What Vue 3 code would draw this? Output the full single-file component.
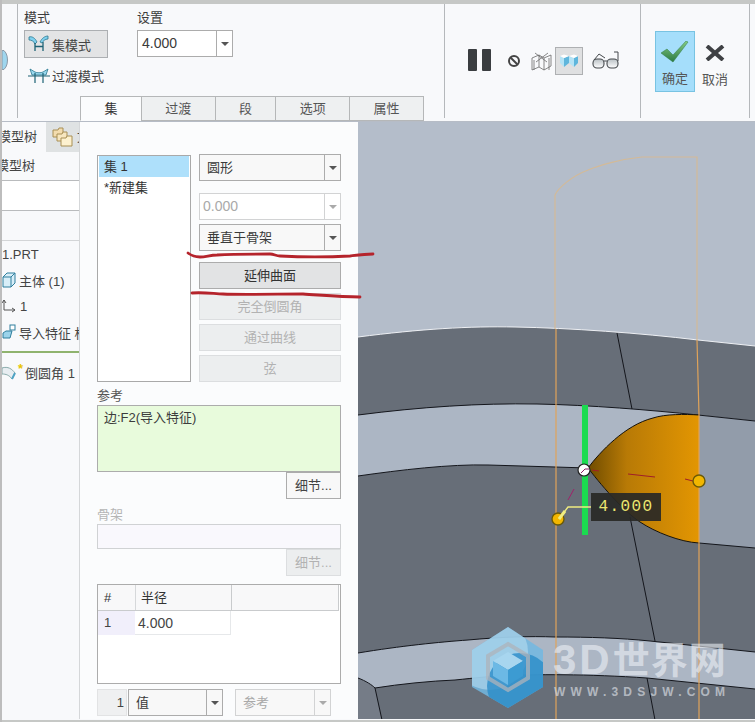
<script setup>
const tabs = ['集', '过渡', '段', '选项', '属性']
const disabledBtns = ['完全倒圆角', '通过曲线', '弦']

// model edges, shared by the filled faces and the black lines over them
const edgeTop = 'M358 337C420 329 470 326 515 327C570 328 640 333 698 340L755 346'
const edgeUpper = 'M358 415C420 407 480 403 537 404C590 405 650 410 698 415L755 421'
const edgeMid = 'M358 476C400 470 450 464 488 465L555 467L588 468'
const edgeMidFull = edgeMid + 'C605 490 625 512 640 522C655 532 680 542 700 543L755 548'
const edgeLow = 'M358 653C400 646 440 642 468 640C500 637 530 636 555 637C590 637 620 638 650 641L755 652'
const edgeBottom = 'M375 688C400 684 430 681 455 680C475 678 490 676 505 676C530 674 590 674 647 678L755 689'
const close = 'L755 722L358 722Z'
</script>

<template>
  <div class="page">
    <div class="topline"></div>
    <header class="ribbon">
      <div class="group group-edge">
        <svg class="sliver" width="6" height="20" viewBox="0 0 6 20"><path d="M0 0A5.5 10 0 0 1 0 20Z" fill="#9fd6ee" stroke="#8a98a5"/></svg>
      </div>
      <div class="group group-mode">
        <div class="mode-col">
          <div class="label">模式</div>
          <div class="mode-btn active">
            <svg width="24" height="20" viewBox="0 0 24 20"><path d="M2 3C5 2 8 4 10 8L8 10C7 7 4 6 2 6Z" fill="#7fd0ee" stroke="#2b7890" stroke-width=".8"/><path d="M21 2C18 2 15 4 13 8L15 9C16 7 18 5 21 5Z" fill="#7fd0ee" stroke="#2b7890" stroke-width=".8"/><path d="M8 9V17M16 8V17M8 12.5H16" stroke="#1d6275" stroke-width="1.3" fill="none"/></svg>
            集模式
          </div>
          <div class="mode-btn">
            <svg width="24" height="20" viewBox="0 0 24 20"><path d="M3 4L8 7C10 8 14 8 16 7L21 4L19 10H5Z" fill="#9ad8ee" stroke="#2b7890" stroke-width=".8"/><path d="M1 11H23M8 8V18M16 8V18" stroke="#1d6275" stroke-width="1.2" fill="none"/></svg>
            过渡模式
          </div>
        </div>
        <div class="setting-col">
          <div class="label">设置</div>
          <div class="select wide"><span class="value">4.000</span><i class="arrow"><b></b></i></div>
        </div>
      </div>
      <div class="group group-tools">
        <svg class="pause" width="23" height="22" viewBox="0 0 23 22"><rect x="0" y="0" width="9" height="22" rx="1" fill="#3a3d40"/><rect x="14" y="0" width="9" height="22" rx="1" fill="#3a3d40"/></svg>
        <svg class="stop" width="14" height="14" viewBox="0 0 14 14"><circle cx="7" cy="7" r="5" fill="none" stroke="#444" stroke-width="2"/><path d="M3.5 3.5L10.5 10.5" stroke="#444" stroke-width="2"/></svg>
        <svg class="wire" width="21" height="20" viewBox="0 0 21 20"><path d="M1 6L8 3L13 6L20 3V14L13 18L8 15L1 18ZM8 3V15M13 6V18M4 1L16 10M17 1L5 10M3 8V18M18 6V18" fill="none" stroke="#6a6a6a" stroke-width=".8"/></svg>
        <div class="shade-btn">
          <svg width="20" height="14" viewBox="0 0 20 14"><path d="M1 2L5 4V13L1 9Z" fill="#b5e3f5"/><path d="M5 4L10 2V9L5 13Z" fill="#5fb6dc"/><path d="M10 2L15 4V13L10 9Z" fill="#b5e3f5"/><path d="M15 4L19 2V9L15 13Z" fill="#5fb6dc"/><path d="M1 2L5 0.5L10 2L15 0.5L19 2L15 4L10 2L5 4Z" fill="#fff"/></svg>
        </div>
        <svg class="glasses" width="28" height="18" viewBox="0 0 28 18">
          <defs><linearGradient id="lens" x1="0" y1="0" x2="0" y2="1"><stop offset="0" stop-color="#b9c0c4"/><stop offset="1" stop-color="#fff"/></linearGradient></defs>
          <rect x="1" y="8" width="11" height="9" rx="4" fill="url(#lens)" stroke="#45494c" stroke-width="1.1"/>
          <rect x="15" y="8" width="11" height="9" rx="4" fill="url(#lens)" stroke="#45494c" stroke-width="1.1"/>
          <path d="M12 10H15M2 9L7 3L13 7M26 10V1H22" fill="none" stroke="#45494c" stroke-width="1"/>
        </svg>
      </div>
      <div class="group group-ok">
        <div class="ok-btn">
          <svg width="28" height="22" viewBox="0 0 28 22">
            <defs><linearGradient id="tick" x1="0" y1="0" x2="0" y2="1"><stop offset="0" stop-color="#86cc84"/><stop offset="1" stop-color="#2b7a43"/></linearGradient></defs>
            <path d="M0 12L6 8L12 14L25 0L27 1L12 21Z" fill="url(#tick)" stroke="#2d7a41" stroke-width=".5"/>
          </svg>
          <span>确定</span>
        </div>
        <div class="cancel-btn">
          <svg width="20" height="16" viewBox="0 0 20 16"><path d="M2 1L18 15M18 1L2 15" stroke="#3f4144" stroke-width="4"/></svg>
          <span>取消</span>
        </div>
      </div>
    </header>

    <div class="tabs">
      <div v-for="(t, i) in tabs" :key="t" class="tab" :class="{ current: i === 0, narrow: i === 0 || i === 2 }">{{ t }}</div>
    </div>

    <main class="body">
      <aside class="tree">
        <div class="tree-tabs">
          <div class="tree-tab first"><span>模型树</span></div>
          <div class="tree-tab folder">
            <svg width="21" height="20" viewBox="0 0 21 20"><path d="M1 3H6L7 1H11V10H1Z" fill="#f3dcae" stroke="#a88f55"/><path d="M5 7H10L11 5H15V14H5Z" fill="#f7e6bf" stroke="#a88f55"/><path d="M9 11H14L15 9H20V19H9Z" fill="#fdf1cf" stroke="#a88f55"/></svg>
            <span>文件夹</span>
          </div>
        </div>
        <div class="tree-title"><span>模型树</span></div>
        <div class="tree-search"></div>
        <div class="tree-gap"></div>
        <div class="tree-list">
          <div class="tree-row">1.PRT</div>
          <div class="tree-row">
            <svg width="14" height="16" viewBox="0 0 14 16"><path d="M1 5L5 1H13V11L9 15H1Z" fill="#d8eef8" stroke="#2f7f9d"/><path d="M1 5H9V15M9 5L13 1" fill="none" stroke="#2f7f9d"/></svg>
            主体 (1)
          </div>
          <div class="tree-row axis">
            <svg width="14" height="14" viewBox="0 0 14 14"><path d="M2 1V11H13M2 1L0 4M2 1L4 4M13 11L10 9M13 11L10 13" fill="none" stroke="#555"/></svg>
            1
          </div>
          <div class="tree-row clip">
            <svg width="14" height="16" viewBox="0 0 14 16"><rect x="8" y="1" width="5" height="5" fill="#fff" stroke="#2f7f9d"/><path d="M1 9L4 7H10L8 14H1Z" fill="#9bd3ea" stroke="#2f7f9d"/></svg>
            导入特征 标识
          </div>
          <div class="insert-line"></div>
          <div class="tree-row fillet-row">
            <svg width="14" height="16" viewBox="0 0 14 16"><path d="M0 4C6 2 10 5 13 9L10 15C7 11 4 10 0 10Z" fill="#e7edf1" stroke="#8aa"/><path d="M10 15L13 9" stroke="#4ea3c4" stroke-width="2"/></svg>
            <span class="star">*</span>倒圆角 1
          </div>
        </div>
      </aside>

      <section class="panel">
        <div class="set-row">
          <div class="set-list">
            <div class="set-item selected">集 1</div>
            <div class="set-item">*新建集</div>
          </div>
          <div class="set-opts">
            <div class="select"><span class="value">圆形</span><i class="arrow"><b></b></i></div>
            <div class="select off gap-l"><span class="value num">0.000</span><i class="arrow"><b></b></i></div>
            <div class="select gap-s"><span class="value">垂直于骨架</span><i class="arrow"><b></b></i></div>
            <div class="btn pressed gap-m">延伸曲面</div>
            <div v-for="b in disabledBtns" :key="b" class="btn off gap-s">{{ b }}</div>
          </div>
        </div>

        <div class="field-label ref-label">参考</div>
        <div class="ref-box">边:F2(导入特征)</div>
        <div class="detail-row"><div class="detail">细节...</div></div>

        <div class="field-label dim skel-label">骨架</div>
        <div class="skel-box"></div>
        <div class="detail-row"><div class="detail off">细节...</div></div>

        <div class="radius-table">
          <div class="thead">
            <span class="c1">#</span><span class="c2">半径</span><span class="c3"></span>
          </div>
          <div class="trow">
            <span class="c1 idx">1</span><span class="c2 val">4.000</span>
          </div>
        </div>

        <div class="value-row">
          <div class="count">1</div>
          <div class="select small"><span class="value">值</span><i class="arrow"><b></b></i></div>
          <div class="select small off ref-sel"><span class="value">参考</span><i class="arrow"><b></b></i></div>
        </div>
      </section>

      <section class="canvas">
        <svg class="scene" width="397" height="598" viewBox="358 122 397 598">
          <defs>
            <linearGradient id="fillet" x1="0" y1="0" x2="1" y2="0">
              <stop offset="0" stop-color="#6f4c00"/>
              <stop offset=".35" stop-color="#b87a06"/>
              <stop offset="1" stop-color="#e39602"/>
            </linearGradient>
            <clipPath id="hexClip"><polygon points="508,627 543,650 543,687 508,708 472,687 472,650"/></clipPath>
          </defs>
          <rect x="358" y="122" width="397" height="600" fill="#b4bdca"/>
          <!-- faces, painted top to bottom -->
          <path :d="edgeTop + close" fill="#676e78"/>
          <path :d="edgeUpper + close" fill="#acb6c4"/>
          <path d="M699 415L755 421V549L699 543Z" fill="#929caa"/>
          <path :d="edgeMidFull + close" fill="#676e78"/>
          <path :d="edgeLow + close" fill="#acb6c4"/>
          <path :d="edgeBottom + 'L755 722L375 722Z'" fill="#676e78"/>
          <path d="M358 678C366 681 372 685 375 688L382 722H358Z" fill="#757c87"/>
          <!-- edges -->
          <path :d="edgeTop" fill="none" stroke="#eef0f4" stroke-width="1"/>
          <g fill="none" stroke="#14161c" stroke-width="1">
            <path :d="edgeUpper"/>
            <path :d="edgeMid"/>
            <path d="M699 543L755 548"/>
            <path :d="edgeLow"/>
            <path :d="edgeBottom"/>
            <path d="M358 678C366 681 372 685 375 688L382 720"/>
            <path d="M617 333L632 409"/>
            <path d="M630 517L655 641"/>
            <path d="M647 678L655 720"/>
          </g>
          <!-- orange fillet -->
          <path d="M588 468C600 452 625 425 653 418C665 414 685 414 699 415V543C680 542 655 532 640 522C625 512 605 490 588 468Z" fill="url(#fillet)"/>
          <path d="M699 415C685 414 665 414 653 418C625 425 600 452 588 468C605 490 625 512 640 522C655 532 680 542 699 543" fill="none" stroke="#15110a" stroke-width="1"/>
          <!-- preview outline -->
          <path d="M555 195C558 188 572 176 588 170C600 165 622 159 642 157H697V340" fill="none" stroke="#d3ba98" stroke-width="1.2"/>
          <path d="M555 195V329" fill="none" stroke="#d3ba98" stroke-width="1.2"/>
          <path d="M556 329V722M697 340L699 415V722" fill="none" stroke="#dfa35a" stroke-width="1.2"/>
          <path d="M628 474L655 477M685 479L693 481M592 470L599 471" stroke="#a01e28" stroke-width="1" fill="none"/>
          <path d="M568 500L574 489" stroke="#a0226a" stroke-width="1"/>
          <!-- drag handles -->
          <rect x="582" y="405" width="6" height="130" fill="#1bdb50"/>
          <circle cx="584" cy="470" r="6" fill="#fff" stroke="#222" stroke-width="1.2"/>
          <path d="M581 473L585 469H589" stroke="#8a2060" stroke-width="1" fill="none"/>
          <circle cx="558" cy="519" r="6" fill="#f2b600" stroke="#6b5a08" stroke-width="1.4"/>
          <circle cx="699" cy="481" r="6" fill="#f2b600" stroke="#6b5a08" stroke-width="1.4"/>
          <path d="M559 519L568 507H591" fill="none" stroke="#f0ec80" stroke-width="1.4"/>
          <path d="M559 519L565 511" fill="none" stroke="#f0ec80" stroke-width="3"/>
          <!-- watermark logo -->
          <g clip-path="url(#hexClip)">
            <rect x="472" y="627" width="71" height="81" fill="#72b9e2" opacity=".85"/>
            <circle cx="490" cy="652" r="38" fill="#b7dcf0" opacity=".6"/>
            <circle cx="520" cy="686" r="33" fill="#2a8cc8" opacity=".8"/>
          </g>
          <polygon points="508,644 528,656 528,678 508,690 488,678 488,656" fill="none" stroke="#aeb3bb" stroke-opacity=".75" stroke-width="4"/>
          <path d="M508 652L523 661L508 670L493 661Z" fill="#a8d6ef"/>
          <path d="M493 661L508 670V685L493 676Z" fill="#6cb9e5"/>
          <path d="M523 661L508 670V685L523 676Z" fill="#3c9bd2"/>
        </svg>
        <div class="dim-tag">4.000</div>
        <div class="mark-name"><span class="mark-3d">3D</span>世界网</div>
        <div class="mark-url">WWW.3DSJW.COM</div>
      </section>
    </main>
    <div class="bottomline"></div>

    <!-- red marker strokes drawn over the screenshot -->
    <svg class="marker" width="755" height="722" viewBox="0 0 755 722">
      <path d="M188 253C192 256 196 257 200 257C206 257 210 255 217 255C235 254 255 254 270 254C274 254 276 256 280 256C300 257 330 257 350 256C358 255 365 254 373 254" />
      <path d="M192 293C205 292 215 294 223 294C240 295 280 294 303 294C320 295 340 297 360 297" />
    </svg>
  </div>
</template>

<style>
html, body { margin: 0; padding: 0; background: #fff; }
</style>

<style scoped>
.page {
  position: relative;
  width: 755px; height: 722px; overflow: hidden;
  background: #f8f9fb; color: #333;
  font-family: "Liberation Sans", "Noto Sans CJK SC", sans-serif;
  font-size: 13px;
  border-left: 2px solid #bdbdbd;
  box-sizing: border-box;
}
.topline { height: 4px; background: #c6c8c6; margin-left: -2px; }
.ribbon { height: 92px; display: flex; background: #f8f9fb; }
.group { border-right: 1px solid #b5b8bb; height: 114px; box-sizing: border-box; position: relative; z-index: 1; flex: none; }
.group-edge { width: 16px; display: flex; align-items: flex-start; padding-top: 46px; box-sizing: border-box; }
.sliver { display: block; }
.group-mode { width: 427px; display: flex; padding: 5px 0 0 6px; gap: 29px; box-sizing: border-box; }
.label { font-size: 13px; line-height: 17px; color: #3c3c3c; }
.mode-col { width: 84px; }
.mode-btn { height: 28px; display: flex; align-items: center; gap: 1px; padding-left: 3px; width: 84px; box-sizing: border-box; margin-top: 4px; color: #444; }
.mode-btn svg { flex: none; }
.mode-btn.active { background: #e3e4e5; border: 1px solid #acafb2; padding-left: 2px; }
.mode-btn + .mode-btn { margin-top: 3px; }
.setting-col { width: 100px; }
.select { height: 27px; display: flex; background: #f8f8f8; border: 1px solid #acacac; box-sizing: border-box; color: #3a3a3a; }
.select.wide { width: 96px; margin-top: 4px; background: #fff; }
.select.wide .value { font-size: 14px; padding-left: 4px; line-height: 25px; }
.select .value { flex: 1; padding-left: 7px; line-height: 25px; }
.arrow { width: 15px; border-left: 1px solid #acacac; display: flex; align-items: center; justify-content: center; font-style: normal; }
.arrow b { width: 0; height: 0; border: 4px solid transparent; border-top: 4px solid #555; border-bottom: 0; }
.select.off { background: #fff; border-color: #d2d3d4; color: #a9a9a9; }
.select.off .arrow { border-left-color: #d2d3d4; }
.select.off .arrow b { border-top-color: #aaa; }
.select .num { padding-left: 3px; font-size: 14px; }
.group-tools { width: 196px; display: flex; align-items: flex-start; padding: 45px 0 0 23px; box-sizing: border-box; }
.group-tools svg { flex: none; }
.pause { margin-right: 16px; }
.stop { margin: 5px 10px 0 0; }
.wire { margin: 3px 3px 0 0; }
.shade-btn { width: 28px; height: 28px; background: #dfe0e1; border: 1px solid #aeb0b2; box-sizing: border-box; display: flex; align-items: center; justify-content: center; margin: -2px 9px 0 0; flex: none; }
.glasses { margin-top: 2px; }
.group-ok { width: 109px; display: flex; padding: 27px 0 0 14px; box-sizing: border-box; gap: 0; }
.ok-btn, .cancel-btn { display: flex; flex-direction: column; align-items: center; width: 40px; height: 61px; box-sizing: border-box; padding-top: 9px; color: #555; flex: none; }
.ok-btn { background: #a5defb; border: 1px solid #78c3e2; }
.ok-btn span, .cancel-btn span { line-height: 16px; font-size: 13px; }
.ok-btn span { margin-top: 8px; }
.cancel-btn { padding-top: 14px; }
.cancel-btn span { margin-top: 11px; }

.tabs { position: relative; z-index: 2; display: flex; height: 25px; margin-left: 78px; background: #eef0f1; width: 344px; box-sizing: border-box; border-top: 1px solid #b5b7b8; border-right: 1px solid #b5b7b8; }
.tab { width: 74px; box-sizing: border-box; text-align: center; line-height: 24px; border-left: 1px solid #b5b7b8; border-bottom: 1px solid #b5b7b8; color: #555; font-size: 13px; }
.tab.narrow { width: 61px; }
.tab.current { background: #fbfcfd; border-bottom-color: #fbfcfd; color: #333; }

.body { display: flex; height: 598px; border-top: 1px solid #b6bcc6; box-sizing: border-box; }
.tree { width: 78px; border-right: 1px solid #d5d7d9; box-sizing: border-box; background: #f8f9fb; overflow: hidden; flex: none; }
.tree-tabs { display: flex; height: 30px; align-items: stretch; }
.tree-tab { white-space: nowrap; line-height: 30px; color: #444; }
.tree-tab.first { width: 44px; flex: none; overflow: hidden; }
.tree-tab.first span { display: block; margin-left: -4px; }
.tree-tab.folder { background: #dfe2e3; flex: 1; display: flex; align-items: center; padding-left: 6px; gap: 4px; overflow: hidden; }
.tree-tab.folder svg { flex: none; }
.tree-title { height: 28px; line-height: 28px; color: #444; overflow: hidden; white-space: nowrap; }
.tree-title span { display: block; margin-left: -6px; }
.tree-search { height: 31px; background: #fff; border-top: 1px solid #b9bbbd; border-bottom: 1px solid #b9bbbd; box-sizing: border-box; }
.tree-gap { height: 30px; border-bottom: 1px solid #d3d5d7; box-sizing: border-box; }
.tree-row { height: 26px; display: flex; align-items: center; gap: 3px; white-space: nowrap; color: #444; font-size: 13px; overflow: hidden; }
.tree-row svg { flex: none; }
.tree-row.axis { gap: 4px; }
.star { color: #e7c400; font-size: 13px; margin: -8px -1px 0 -1px; font-weight: 700; }
.fillet-row { gap: 3px; }
.insert-line { height: 2px; background: #8fb36e; margin: 6px 0; }

.panel { width: 278px; flex: none; background: #fbfcfd; padding: 32px 0 0 17px; box-sizing: border-box; }
.set-row { display: flex; gap: 8px; }
.set-list { width: 94px; height: 227px; margin-top: 1px; background: #fff; border: 1px solid #a9a9a9; box-sizing: border-box; padding: 0 1px; flex: none; }
.set-item { height: 21px; line-height: 21px; padding-left: 5px; color: #333; font-size: 13px; }
.set-item.selected { background: #aee0fb; }
.set-opts { width: 142px; }
.set-opts .select, .set-opts .btn { width: 142px; }
.gap-l { margin-top: 12px; }
.gap-s { margin-top: 4px; }
.gap-m { margin-top: 11px; }
.btn { height: 27px; line-height: 25px; border: 1px solid #acacac; box-sizing: border-box; background: #e2e3e4; text-align: center; color: #333; }
.btn.off { background: #eceeef; border-color: #dcdee0; color: #b2b2b2; }

.field-label { line-height: 16px; color: #555; font-size: 13px; }
.field-label.dim { color: #b5b5b5; }
.ref-label { margin-top: 6px; }
.ref-box { width: 244px; height: 67px; background: #e8fbdc; border: 1px solid #acacac; box-sizing: border-box; padding: 2px 6px; color: #3c3c3c; margin-top: 1px; line-height: 20px; }
.detail-row { display: flex; justify-content: flex-end; width: 244px; }
.detail { width: 55px; height: 27px; line-height: 25px; border: 1px solid #acacac; box-sizing: border-box; text-align: center; background: #f8f8f8; color: #444; }
.detail.off { background: #eceeef; border-color: #dcdee0; color: #b2b2b2; }
.skel-label { margin-top: 8px; }
.skel-box { width: 244px; height: 25px; background: #f9f8fd; border: 1px solid #d0d2d4; box-sizing: border-box; margin-top: 1px; }
.radius-table { width: 244px; height: 100px; margin-top: 8px; border: 1px solid #acacac; box-sizing: border-box; background: #fff; }
.thead { display: flex; height: 25px; background: #f8f8f9; border-bottom: 1px solid #c9cbcd; margin-right: 1px; line-height: 25px; color: #333; border-right: 1px solid #c9cbcd; }
.c1 { width: 37px; padding-left: 6px; box-sizing: border-box; }
.c2 { width: 96px; border-left: 1px solid #d6d8da; padding-left: 5px; box-sizing: border-box; }
.c3 { flex: 1; border-left: 1px solid #c9cbcd; }
.trow { display: flex; height: 24px; line-height: 24px; }
.idx { background: #f1effb; color: #444; }
.val { border-left: 0; border-right: 1px solid #e6e8ea; border-bottom: 1px solid #e6e8ea; font-size: 14px; color: #444; padding-left: 3px; }
.value-row { display: flex; align-items: center; margin-top: 5px; }
.count { width: 30px; height: 27px; line-height: 25px; background: #eff0f1; text-align: right; padding-right: 2px; box-sizing: border-box; border: 1px solid #e2e3e4; color: #444; margin-right: 1px; }
.select.small { width: 95px; }
.ref-sel { margin-left: 12px; background: #f8f8f8; }
.select.small.ref-sel { width: 96px; background: #f8f8f8; }

.canvas { flex: 1; position: relative; overflow: hidden; background: #b4bdca; }
.scene { display: block; }
.dim-tag { position: absolute; left: 233px; top: 371px; width: 70px; height: 28px; background: rgba(40, 40, 38, .92); color: #ece670; font-family: "Liberation Mono", monospace; font-size: 16px; letter-spacing: 1.4px; line-height: 28px; text-align: center; }
.mark-name { position: absolute; left: 195px; top: 517px; font-size: 37px; line-height: 42px; font-weight: 700; color: rgba(236, 240, 245, .62); white-space: nowrap; letter-spacing: 1px; }
.mark-3d { font-size: 42px; letter-spacing: 3px; }
.mark-url { position: absolute; left: 196px; top: 563px; font-size: 12px; line-height: 14px; font-weight: 700; letter-spacing: 5.2px; color: rgba(228, 232, 238, .62); white-space: nowrap; }
.bottomline { height: 2px; background: #c6c8c6; position: absolute; left: -2px; right: 0; bottom: 0; z-index: 3; }
.marker { position: absolute; left: -2px; top: 0; z-index: 4; pointer-events: none; }
.marker path { fill: none; stroke: #b5242c; stroke-width: 2.8; stroke-linecap: round; }
</style>
